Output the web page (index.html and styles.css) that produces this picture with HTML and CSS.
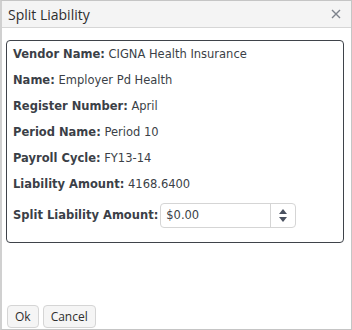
FILE: index.html
```html
<!DOCTYPE html>
<html lang="en">
<head>
    <meta charset="UTF-8">
    <title>Split Liability</title>
    <link rel="stylesheet" href="styles.css">
</head>
<body>
    <div class="window">
        <div class="titlebar">
            <span class="title">Split Liability</span>
            <svg class="close" width="10" height="10" viewBox="0 0 10 10">
                <path d="M1 1 L9 9 M9 1 L1 9" stroke="#7d838c" stroke-width="1.4" fill="none"/>
            </svg>
        </div>
        <div class="content">
            <div class="details">
                <p><b>Vendor Name:</b> CIGNA Health Insurance</p>
                <p><b>Name:</b> Employer Pd Health</p>
                <p><b>Register Number:</b> April</p>
                <p><b>Period Name:</b> Period 10</p>
                <p><b>Payroll Cycle:</b> FY13-14</p>
                <p><b>Liability Amount:</b> 4168.6400</p>
                <div class="split-row">
                    <b>Split Liability Amount:</b>
                    <div class="numeric">
                        <span class="value">$0.00</span>
                        <span class="spin">
                            <span class="arrow up"></span>
                            <span class="arrow down"></span>
                        </span>
                    </div>
                </div>
            </div>
        </div>
        <div class="footer">
            <button class="btn">Ok</button>
            <button class="btn">Cancel</button>
        </div>
    </div>
</body>
</html>
```

FILE: styles.css
```css
body {
    margin: 0;
    font-family: "DejaVu Sans", Verdana, sans-serif;
    color: #3b3f47;
}

.window {
    width: 352px;
    height: 330px;
    box-sizing: border-box;
    border: 1px solid #c5c5c5;
    border-left: 2px solid #d0d0d0;
    background: white;
    display: flex;
    flex-direction: column;
}

.titlebar {
    height: 26px;
    background: #f4f4f4;
    border-bottom: 1px solid #d6d6d6;
    display: flex;
    align-items: center;
    justify-content: space-between;
    padding: 0 10px 0 6px;
}

.title {
    font-family: "Open Sans", sans-serif;
    font-size: 14px;
    color: #2e2e2e;
}

.content {
    flex: 1;
    padding: 12px 7px 0 4px;
}

.details {
    border: 1px solid #3f434a;
    border-radius: 4px;
    padding: 3px 6px 12px 6px;
    font-size: 11.5px;
}

.details p {
    margin: 0 0 6px 0;
    line-height: 20px;
}

.split-row {
    display: flex;
    align-items: center;
    gap: 2px;
    height: 30px;
}

.numeric {
    display: flex;
    width: 136px;
    height: 25px;
    border: 1px solid #d5d5d5;
    border-radius: 4px;
    box-sizing: border-box;
}

.value {
    flex: 1;
    padding-left: 5px;
    line-height: 23px;
}

.spin {
    width: 24px;
    border-left: 1px solid #d5d5d5;
    display: flex;
    flex-direction: column;
    align-items: center;
    justify-content: center;
    gap: 3px;
}

.arrow {
    width: 0;
    height: 0;
    border-left: 4px solid transparent;
    border-right: 4px solid transparent;
}

.arrow.up {
    border-bottom: 5px solid #4a5160;
}

.arrow.down {
    border-top: 5px solid #4a5160;
}

.footer {
    padding: 0 0 1px 5px;
    display: flex;
    gap: 4px;
}

.btn {
    font-family: "Open Sans", sans-serif;
    font-size: 12px;
    color: #2e2e2e;
    background: #f5f5f5;
    border: 1px solid #d5d5d5;
    border-radius: 4px;
    height: 23px;
    padding: 0 7px;
}
```
